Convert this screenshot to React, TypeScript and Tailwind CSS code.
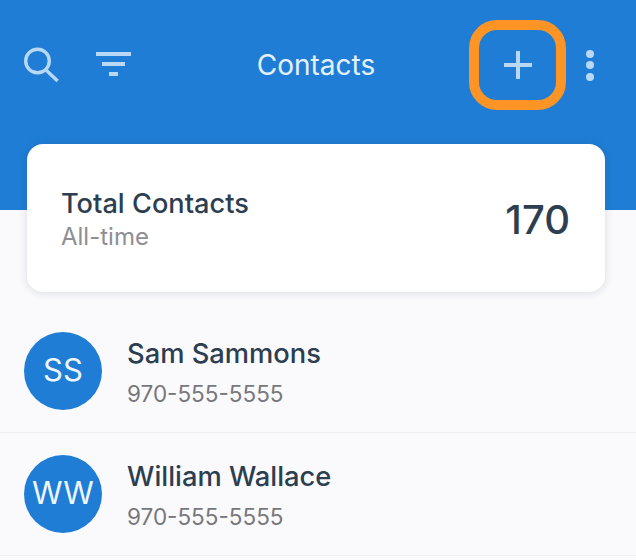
import React from 'react';

const contacts = [
  { initials: 'SS', name: 'Sam Sammons', phone: '970-555-5555' },
  { initials: 'WW', name: 'William Wallace', phone: '970-555-5555' },
];

const SearchIcon = () => (
  <svg width="36" height="36" viewBox="0 0 36 36" fill="none" stroke="#b9d8f5" strokeWidth="3.4">
    <circle cx="13.5" cy="14" r="11.8" />
    <path d="M22 23 L33.6 34" />
  </svg>
);

const FilterIcon = () => (
  <svg width="36" height="26" viewBox="0 0 36 26" fill="#b9d8f5">
    <rect x="0" y="0" width="35" height="4" />
    <rect x="6" y="10" width="23" height="4" />
    <rect x="13" y="20" width="9" height="4" />
  </svg>
);

const PlusIcon = () => (
  <svg width="28" height="28" viewBox="0 0 28 28" fill="#b9d8f5">
    <rect x="0" y="12" width="28" height="4" />
    <rect x="12" y="0" width="4" height="28" />
  </svg>
);

const App: React.FC = () => {
  return (
    <div className="h-[560px] w-[636px] overflow-hidden bg-[#fafafd] font-['Inter','Liberation_Sans',sans-serif]">
      <header className="relative flex h-[210px] items-start bg-[#1f7dd5] pl-6 pr-[42px] pt-5">
        <div className="flex h-[90px] items-center gap-[36px]">
          <SearchIcon />
          <FilterIcon />
        </div>
        <h1 className="absolute left-0 right-1 top-5 flex h-[90px] items-center justify-center text-[28px] font-normal text-[#e4f1fc]">
          Contacts
        </h1>
        <div className="ml-auto flex h-[90px] items-center gap-5">
          <button className="flex h-[90px] w-[97px] items-center justify-center rounded-[28px] border-[10px] border-[#fd9426]">
            <PlusIcon />
          </button>
          <div className="flex flex-col gap-[3.5px]">
            <span className="h-2 w-2 rounded-full bg-[#b9d8f5]" />
            <span className="h-2 w-2 rounded-full bg-[#b9d8f5]" />
            <span className="h-2 w-2 rounded-full bg-[#b9d8f5]" />
          </div>
        </div>
      </header>

      <section className="relative mx-[27px] -mt-[66px] flex h-[148px] w-[578px] items-center justify-between rounded-[16px] bg-white pl-[34px] pr-[35px] pt-[3px] shadow-[0_1px_8px_rgba(30,40,60,0.14)]">
        <div>
          <div className="text-[27.2px] font-medium leading-[33px] text-[#2c3e50]">Total Contacts</div>
          <div className="mt-[2px] text-[24px] leading-[30px] text-[#8e8e93]">All-time</div>
        </div>
        <div className="text-[40px] font-[550] text-[#2c3e50]">170</div>
      </section>

      <ul className="mt-[18px]">
        {contacts.map((c) => (
          <li key={c.initials} className="flex h-[123px] items-center gap-[25px] border-b border-[#eeeef2] pb-px pl-6">
            <div className="flex h-[78px] w-[78px] items-center justify-center rounded-full bg-[#1f7dd5] text-[31px] text-[#eef6fd]">
              {c.initials}
            </div>
            <div className="pt-[4px]">
              <div className="text-[27.3px] font-medium leading-[34px] text-[#2c3e50]">{c.name}</div>
              <div className="mt-[9px] text-[22.5px] leading-[28px] text-[#77777c]">{c.phone}</div>
            </div>
          </li>
        ))}
      </ul>
    </div>
  );
};

export default App;
